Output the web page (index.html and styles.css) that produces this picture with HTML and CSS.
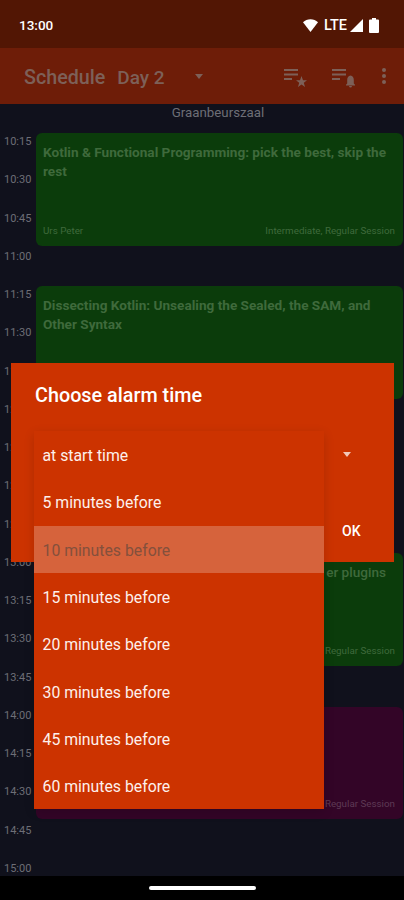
FILE: index.html
```html
<!DOCTYPE html>
<html lang="en" dir="ltr">
    <head>
        <meta charset="utf-8">
        <title>Schedule</title>
        <link rel="stylesheet" href="styles.css">
    </head>
    <body>
        <div class="phone">
            <div class="statusbar">
                <span class="clock">13:00</span>
                <div class="status-icons">
                    <svg width="15" height="13" viewBox="0 0 15 13"><path d="M0 3.2C2 1.2 4.6 0.2 7.5 0.2S13 1.2 15 3.2L7.5 13Z" fill="#fff"/></svg>
                    <span class="lte">LTE</span>
                    <svg width="13" height="13" viewBox="0 0 13 13"><path d="M13 0V13H0Z" fill="#fff"/></svg>
                    <svg class="battery" width="10" height="15" viewBox="0 0 10 15"><path d="M3 0H7V1.5H9Q10 1.5 10 2.5V14Q10 15 9 15H1Q0 15 0 14V2.5Q0 1.5 1 1.5H3Z" fill="#fff"/></svg>
                </div>
            </div>
            <div class="toolbar">
                <span class="toolbar-title">Schedule</span>
                <span class="toolbar-day">Day 2</span>
                <span class="toolbar-caret"></span>
                <svg class="toolbar-icon" width="24" height="24" viewBox="0 0 24 24"><path d="M1 5H15V7H1ZM1 9.5H15V11.5H1ZM1 14H9V16H1Z" fill="#7d6058"/><path d="M18.5 12L20 16.2H24L20.8 18.7L22 23L18.5 20.4L15 23L16.2 18.7L13 16.2H17Z" fill="#7d6058"/></svg>
                <svg class="toolbar-icon last" width="24" height="24" viewBox="0 0 24 24"><path d="M1 5H15V7H1ZM1 9.5H15V11.5H1ZM1 14H9V16H1Z" fill="#7d6058"/><path d="M19.5 11.5Q22.8 12 22.8 16V19.5L24 20.8V21.5H15V20.8L16.2 19.5V16Q16.2 12 19.5 11.5ZM18 22H21Q20.8 23.5 19.5 23.5T18 22Z" fill="#7d6058"/></svg>
                <div class="toolbar-more"><i></i><i></i><i></i></div>
            </div>
            <div class="room">Graanbeurszaal</div>
            <div class="schedule">
                <div class="times">
                    <span>10:15</span><span>10:30</span><span>10:45</span><span>11:00</span>
                    <span>11:15</span><span>11:30</span><span>11:45</span><span>12:00</span>
                    <span>12:15</span><span>12:30</span><span>12:45</span><span>13:00</span>
                    <span>13:15</span><span>13:30</span><span>13:45</span><span>14:00</span>
                    <span>14:15</span><span>14:30</span><span>14:45</span><span>15:00</span>
                </div>
                <div class="sessions">
                    <div class="card green first">
                        <div class="card-title">Kotlin &amp; Functional Programming: pick the best, skip the rest</div>
                        <div class="card-foot"><span>Urs Peter</span><span>Intermediate, Regular Session</span></div>
                    </div>
                    <div class="card green second">
                        <div class="card-title">Dissecting Kotlin: Unsealing the Sealed, the SAM, and Other Syntax</div>
                    </div>
                    <div class="card green third">
                        <div class="card-title right">er plugins</div>
                        <div class="card-foot"><span></span><span>Regular Session</span></div>
                    </div>
                    <div class="card purple fourth">
                        <div class="card-foot"><span></span><span>Regular Session</span></div>
                    </div>
                </div>
            </div>
            <div class="navbar"><div class="nav-pill"></div></div>

            <div class="dialog">
                <div class="dialog-title">Choose alarm time</div>
                <span class="spinner-caret"></span>
                <span class="dialog-ok">OK</span>
            </div>
            <div class="menu">
                <div class="menu-item">at start time</div>
                <div class="menu-item">5 minutes before</div>
                <div class="menu-item selected">10 minutes before</div>
                <div class="menu-item">15 minutes before</div>
                <div class="menu-item">20 minutes before</div>
                <div class="menu-item">30 minutes before</div>
                <div class="menu-item">45 minutes before</div>
                <div class="menu-item">60 minutes before</div>
            </div>
        </div>
    </body>
</html>
```

FILE: styles.css
```css
*{
    box-sizing: border-box;
}
body{
    margin: 0;
    padding: 0;
    font-family: Roboto, "Liberation Sans", sans-serif;
    background-color: #000;
}
.phone{
    position: relative;
    width: 404px;
    height: 900px;
    overflow: hidden;
    display: flex;
    flex-direction: column;
    background-color: #10111c;
}

.statusbar{
    height: 48px;
    flex: none;
    display: flex;
    align-items: center;
    justify-content: space-between;
    padding: 2px 25px 0 19px;
    background-color: #521604;
    color: #fff;
}
.clock{
    font-size: 13.5px;
    font-weight: 500;
}
.status-icons{
    display: flex;
    align-items: center;
    gap: 3px;
}
.lte{
    margin-left: 3px;
    font-size: 14.5px;
    font-weight: 500;
}
.battery{
    margin-left: 3px;
}

.toolbar{
    height: 56px;
    flex: none;
    display: flex;
    align-items: center;
    padding: 0 18px 0 24px;
    background-color: #6e1d08;
    color: #7d6058;
}
.toolbar-title,.toolbar-day{
    margin-top: 2px;
    font-size: 19.7px;
    font-weight: 500;
}
.toolbar-day{
    margin-left: 12px;
    font-size: 19px;
}
.toolbar-caret{
    width: 0;
    height: 0;
    margin-left: 30px;
    margin-right: auto;
    border-left: 4.5px solid transparent;
    border-right: 4.5px solid transparent;
    border-top: 5px solid #7d6058;
}
.toolbar-icon{
    margin-right: 24px;
}
.toolbar-icon.last{
    margin-right: 27px;
}
.toolbar-more{
    display: flex;
    flex-direction: column;
    gap: 2px;
}
.toolbar-more i{
    display: block;
    width: 4px;
    height: 4px;
    border-radius: 50%;
    background-color: #7d6058;
}

.room{
    height: 29px;
    flex: none;
    padding: 1px 0 0 32px;
    text-align: center;
    font-size: 13.3px;
    color: #6d6e76;
    background-color: #10111c;
}

.schedule{
    flex: 1;
    display: flex;
    min-height: 0;
    overflow: hidden;
}
.times{
    width: 36px;
    flex: none;
    display: flex;
    flex-direction: column;
}
.times span{
    height: 38.25px;
    flex: none;
    padding-left: 4px;
    font-size: 11px;
    line-height: 18px;
    color: #6d6e76;
}
.sessions{
    flex: 1;
    display: flex;
    flex-direction: column;
}
.card{
    height: 113px;
    flex: none;
    margin-right: 1px;
    padding: 10px 8px 8px 7px;
    border-radius: 6px;
    display: flex;
    flex-direction: column;
}
.second{
    margin-top: 40px;
}
.third{
    margin-top: 154px;
}
.fourth{
    height: 112px;
    margin-top: 41px;
}
.green{
    background-color: #0b3c0b;
    color: #3f6a3c;
}
.purple{
    background-color: #330527;
    color: #5e3a55;
}
.card-title{
    font-size: 13.6px;
    font-weight: 700;
    line-height: 19px;
}
.card-title.right{
    text-align: right;
    padding-right: 9px;
    font-weight: 500;
}
.card-foot{
    margin-top: auto;
    display: flex;
    justify-content: space-between;
    font-size: 9.8px;
    line-height: 14px;
}

.navbar{
    height: 24px;
    flex: none;
    display: flex;
    align-items: center;
    justify-content: center;
    background-color: #000;
}
.nav-pill{
    width: 107px;
    height: 4px;
    border-radius: 2px;
    background-color: #fff;
}

/* dialog + open spinner sit over the schedule */
.dialog{
    position: absolute;
    left: 11px;
    top: 363px;
    width: 383px;
    height: 199px;
    background-color: #cc3300;
    color: #fff;
}
.dialog-title{
    position: absolute;
    left: 24px;
    top: 21px;
    font-size: 19.8px;
    font-weight: 500;
}
.spinner-caret{
    position: absolute;
    left: 332px;
    top: 89px;
    width: 0;
    height: 0;
    border-left: 4.5px solid transparent;
    border-right: 4.5px solid transparent;
    border-top: 5px solid #f2c8b8;
}
.dialog-ok{
    position: absolute;
    left: 331px;
    top: 160px;
    font-size: 14px;
    font-weight: 500;
}
.menu{
    position: absolute;
    left: 34px;
    top: 431px;
    width: 290px;
    display: flex;
    flex-direction: column;
    background-color: #cc3300;
    box-shadow: 0 3px 10px rgba(0,0,0,.14);
}
.menu-item{
    height: 47.3px;
    padding: 2px 0 0 8.5px;
    display: flex;
    align-items: center;
    font-size: 15.8px;
    color: #fdf0ec;
}
.menu-item.selected{
    background-color: #d6633c;
    color: #84503c;
}
```
